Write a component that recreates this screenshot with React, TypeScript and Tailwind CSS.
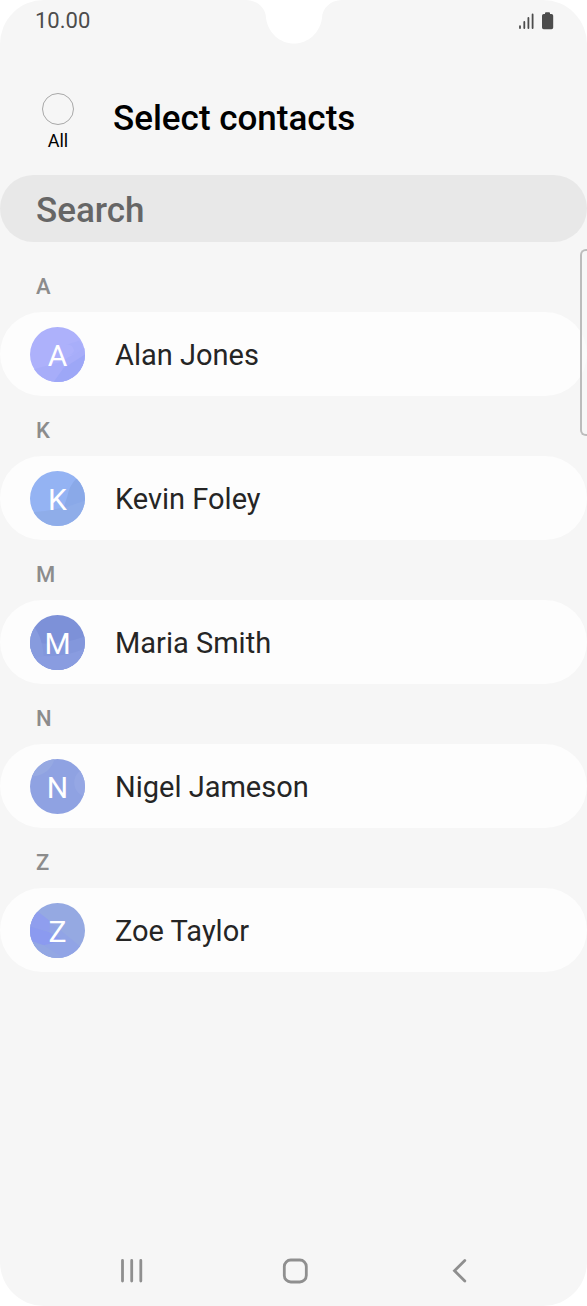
import React from "react";

type Contact = { name: string; art: React.ReactNode };

const contacts: Contact[] = [
  {
    name: "Alan Jones",
    art: (
      <>
        <rect width="56" height="56" fill="#adb1fb" />
        <path d="M0 44 L30 36 L46 27 L56 20 V56 H0Z" fill="#a7adf9" />
        <path d="M24 56 L34 42 L56 28 V56Z" fill="#9da7f7" />
        <path d="M37 18 Q43 17 45 24 Q43 29 38 28 Q48 30 54 20 L50 14Z" fill="#a8aefa" />
      </>
    ),
  },
  {
    name: "Kevin Foley",
    art: (
      <>
        <rect width="56" height="56" fill="#94b3f3" />
        <path d="M0 42 Q30 41 56 29 V56 H0Z" fill="#8fade9" />
        <path d="M38 26 Q40 15 47 8 L56 10 V30 L34 38Z" fill="#8aa9e8" />
      </>
    ),
  },
  {
    name: "Maria Smith",
    art: (
      <>
        <rect width="56" height="56" fill="#7d91d8" />
        <path d="M0 28 Q28 32 56 22 V56 H0Z" fill="#8397dc" />
        <path d="M0 40 Q28 46 56 34 V56 H0Z" fill="#899ce0" />
        <path d="M0 8 Q12 18 14 42 L0 44Z" fill="#879bde" />
      </>
    ),
  },
  {
    name: "Nigel Jameson",
    art: (
      <>
        <rect width="56" height="56" fill="#8fa2e2" />
        <path d="M0 18 Q20 17 25 0 H0Z" fill="#96a9e2" />
        <circle cx="60" cy="24" r="15" fill="#95a7e4" />
      </>
    ),
  },
  {
    name: "Zoe Taylor",
    art: (
      <>
        <rect width="56" height="56" fill="#95a9e2" />
        <path d="M8 9 L56 48 V56 H0 V9Z" fill="#91a4e6" />
        <path d="M0 12 L8 9 L20 18 L20 29 L0 24Z" fill="#8f9eee" />
        <path d="M0 24 L18 29 L34 38 L14 43 L0 38Z" fill="#8b9af0" />
        <path d="M0 40 L14 43 L34 56 H0Z" fill="#93a7e3" />
      </>
    ),
  },
];

function StatusBar() {
  return (
    <div className="flex h-11 items-center justify-between pr-8 pb-[2px] pl-[35px] text-[#4c4c4c]">
      <span className="text-[22px] leading-6">10.00</span>
      <div className="flex items-center gap-[5px]">
        <svg width="18" height="18" viewBox="0 0 18 18" stroke="currentColor" strokeWidth="1.8" strokeLinecap="round" aria-label="Signal strength">
          <path d="M2 14.200V16M6.300 10V16M10.400 6V16M14.600 2.400V16" />
        </svg>
        <svg width="14" height="20" viewBox="0 0 14 20" fill="currentColor" aria-label="Battery full">
          <path d="M4 3V2.200Q4 1.200 5 1.200H8Q9 1.200 9 2.200V3H10.500Q12.200 3 12.200 4.700V16.500Q12.200 18.200 10.500 18.200H2.700Q1 18.200 1 16.500V4.700Q1 3 2.700 3Z" />
        </svg>
      </div>
    </div>
  );
}

function ContactSection({ name, art }: Contact) {
  const letter = name[0];
  return (
    <section>
      <h2 className="flex h-[60px] items-center pt-[10px] pl-9 text-[22px] leading-6 font-medium text-[#8c8c8c]">
        {letter}
      </h2>
      <button
        type="button"
        className="flex h-[84px] w-full items-center gap-[30px] rounded-full bg-[#fdfdfd] pl-[30px] text-left"
      >
        <span className="grid size-[55px] shrink-0 place-items-center overflow-hidden rounded-full" aria-hidden="true">
          <svg className="col-start-1 row-start-1 size-full" viewBox="0 0 56 56">
            {art}
          </svg>
          <span className="z-10 col-start-1 row-start-1 pt-[4px] text-[30px] leading-8 text-white">{letter}</span>
        </span>
        <span className="pt-[2px] text-[29px] leading-9 text-[#252525]">{name}</span>
      </button>
    </section>
  );
}

export default function App() {
  return (
    <div className="min-h-screen bg-white font-['Roboto',sans-serif]">
      <div className="relative flex min-h-screen flex-col overflow-hidden rounded-[44px] bg-[#f6f6f6]">
        <svg className="absolute top-0 left-1/2 -translate-x-1/2" width="96" height="44" viewBox="0 0 96 44" fill="#fff" aria-hidden="true">
          <path d="M0 0C12 0 20 9 20 18C22 33 34 43.500 48 43.500C62 43.500 74 33 76 18C76 9 84 0 96 0Z" />
        </svg>
        <StatusBar />

        <header className="flex h-[131px] items-center gap-[39px] pt-[18px] pl-[42px]">
          <label className="flex flex-col items-center gap-1 pt-2 text-[18px] leading-6 text-black">
            <input
              type="checkbox"
              className="size-8 appearance-none rounded-full border border-[#a8a8a8] checked:bg-[#8fa2e2]"
            />
            All
          </label>
          <h1 className="pt-[1px] text-[35px] leading-10 font-medium text-black">Select contacts</h1>
        </header>

        <input
          type="search"
          aria-label="Search"
          placeholder="Search"
          className="h-[67px] w-full rounded-full bg-[#e8e8e8] px-9 pt-[4px] text-[35px] font-medium text-[#666] outline-none placeholder:text-[#666]"
        />

        <main className="pt-[10px]">
          {contacts.map((c) => (
            <ContactSection key={c.name} {...c} />
          ))}
        </main>

        <div className="absolute top-[249px] right-0 h-[187px] w-[7px] rounded-l-[6px] border-2 border-r-0 border-[#bcbcbc] bg-[#f7f7f7]/50" />

        <nav className="mt-auto grid h-[70px] grid-cols-[1fr_66px_1fr] items-center text-[#8f8f8f]">
          <button type="button" aria-label="Recent apps" className="mr-[113px] justify-self-end">
            <svg width="32" height="32" viewBox="0 0 32 32" fill="none" stroke="currentColor" strokeWidth="2.800" strokeLinecap="round">
              <path d="M6.500 5.500V26M15.700 5.500V26M24.800 5.500V26" />
            </svg>
          </button>
          <button type="button" aria-label="Home" className="justify-self-center">
            <svg width="32" height="32" viewBox="0 0 32 32" fill="none" stroke="currentColor" strokeWidth="2.800">
              <rect x="6.300" y="5" width="22" height="22" rx="6.500" />
            </svg>
          </button>
          <button type="button" aria-label="Back" className="ml-[115px] justify-self-start">
            <svg width="32" height="32" viewBox="0 0 32 32" fill="none" stroke="currentColor" strokeWidth="2.800" strokeLinecap="round">
              <path d="M22.800 5.600L12.500 15.700L22.800 25.900" />
            </svg>
          </button>
        </nav>
      </div>
    </div>
  );
}
